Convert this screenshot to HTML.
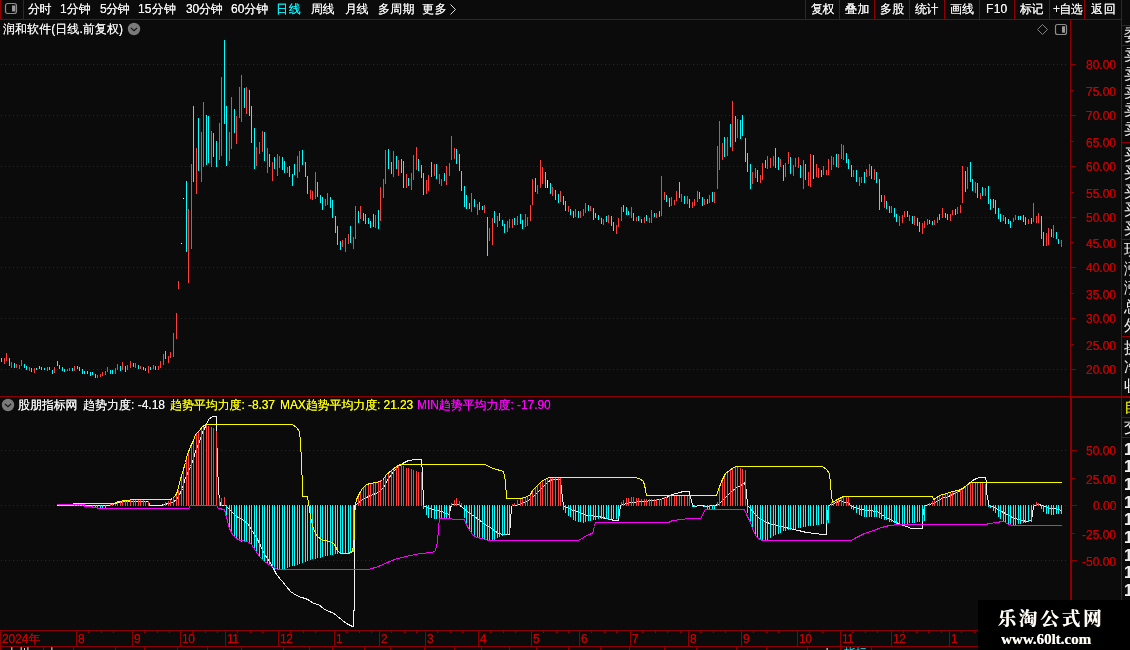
<!DOCTYPE html>
<html lang="zh-CN"><head><meta charset="utf-8"><title>润和软件 日线 - 股朋指标网</title>
<style>
html,body{margin:0;padding:0;background:#0b0b0b}
body{width:1130px;height:650px;position:relative;overflow:hidden;font:12px/12px "Liberation Sans","WenQuanYi Zen Hei",sans-serif;color:#f2f2f2}
.t{position:absolute;white-space:nowrap;height:12px;text-shadow:0 0 0 currentColor}
.cy{color:#00f4ff}.ye{color:#fcfc00}.mg{color:#fa00fa}
.ax{color:#c40000}.nn{letter-spacing:-.5px}
.wm1{position:absolute;left:978px;top:607px;width:143px;text-align:center;font:bold 18.5px/24px "Liberation Serif","Noto Serif CJK SC",serif;color:#fff;letter-spacing:2.9px;text-indent:2.9px;text-shadow:.4px .4px 0 #d8ccb0}
.wm2{position:absolute;left:978px;top:630.5px;width:136px;text-align:center;font:bold 15px/16px "Liberation Serif",serif;color:#fff;text-shadow:.4px .4px 0 #cdbf9c}
.strip{position:absolute;left:1124px;width:6px;overflow:hidden;white-space:nowrap;font:16px/16px "Liberation Sans","WenQuanYi Zen Hei",sans-serif;color:#f0f0f0;height:16px}
.bt{position:absolute;top:647px;height:3px;overflow:hidden;white-space:nowrap;font:12px/12px "Liberation Sans","WenQuanYi Zen Hei",sans-serif;color:#eee}
.t,.wm1,.wm2,.strip,.bt{will-change:transform}
</style></head><body>
<svg width="1130" height="650" viewBox="0 0 1130 650" style="position:absolute;left:0;top:0" shape-rendering="crispEdges">
<g stroke="#880000" stroke-width="1" stroke-dasharray="1 3" fill="none">
<path d="M1 64.5 H1066"/>
<path d="M1 115.5 H1066"/>
<path d="M1 166.5 H1066"/>
<path d="M1 217.5 H1066"/>
<path d="M1 267.5 H1066"/>
<path d="M1 318.5 H1066"/>
<path d="M1 369.5 H1066"/>
<path d="M1 450.5 H1066"/>
<path d="M1 505.5 H1066"/>
<path d="M1 560.5 H1066"/>
</g>
<g stroke="#8e0000" stroke-width="1" fill="none">
<path d="M0.5 0V20M23.5 0V20M0 19.5H1122M805.5 0V20M839.5 0V20M874.5 0V20M909.5 0V20M944.5 0V20M979.5 0V20M1014.5 0V20M1049.5 0V20M1084.5 0V20M1121.5 0V600M1070.5 20V397M0 396.5H1130M1071 397.5H1130M1071.5 397V600M1070.5 397V600M0 630.5H978M0 646.5H978M1071 64.5H1076M1071 90.5H1074M1071 115.5H1076M1071 141.5H1074M1071 166.5H1076M1071 192.5H1074M1071 217.5H1076M1071 242.5H1074M1071 267.5H1076M1071 293.5H1074M1071 318.5H1076M1071 344.5H1074M1071 369.5H1076M1072 450.5H1077M1072 478.5H1075M1072 505.5H1077M1072 533.5H1075M1072 560.5H1077M76.5 630V647M132.5 630V647M180.5 630V647M225.5 630V647M278.5 630V647M334.5 630V647M379.5 630V647M425.5 630V647M478.5 630V647M531.5 630V647M579.5 630V647M630.5 630V647M688.5 630V647M741.5 630V647M797.5 630V647M840.5 630V647M891.5 630V647M949.5 630V647M0.5 630V650M88.5 631V633M101.5 631V633M113.5 631V633M144.5 631V633M157.5 631V633M169.5 631V633M192.5 631V633M205.5 631V633M217.5 631V633M237.5 631V633M250.5 631V633M262.5 631V633M290.5 631V633M303.5 631V633M315.5 631V633M346.5 631V633M359.5 631V633M371.5 631V633M391.5 631V633M404.5 631V633M416.5 631V633M437.5 631V633M450.5 631V633M462.5 631V633M490.5 631V633M503.5 631V633M515.5 631V633M543.5 631V633M556.5 631V633M568.5 631V633M591.5 631V633M604.5 631V633M616.5 631V633M642.5 631V633M655.5 631V633M667.5 631V633M680.5 631V633M700.5 631V633M713.5 631V633M725.5 631V633M753.5 631V633M766.5 631V633M778.5 631V633M809.5 631V633M822.5 631V633M852.5 631V633M865.5 631V633M877.5 631V633M903.5 631V633M916.5 631V633M928.5 631V633M941.5 631V633M961.5 631V633M974.5 631V633M43.5 647V650M73.5 647V650M115.5 647V650M144.5 647V650M177.5 647V650M207.5 647V650M241.5 647V650M283.5 647V650M309.5 647V650M332.5 647V650M364.5 647V650M390.5 647V650M424.5 647V650M454.5 647V650M481.5 647V650M509.5 647V650M536.5 647V650M568.5 647V650M600.5 647V650M629.5 647V650M664.5 647V650M696.5 647V650M736.5 647V650M766.5 647V650M807.5 647V650M840.5 647V650M871.5 647V650M1122 25.5H1130M1122 45.5H1130M1122 142.5H1130M1122 239.5H1130M1122 336.5H1130M1122 417.5H1130M1122 437.5H1130"/>
</g>
<path d="M4.5 358V364M6.5 353V361M11.5 362V368M16.5 364V368M19.5 365V369M21.5 360V366M29.5 367V371M34.5 368V373M47.5 367V371M54.5 367V373M67.5 369V371M69.5 368V371M74.5 366V371M97.5 375V378M100.5 374V377M102.5 372V376M105.5 371V375M107.5 367V372M115.5 368V374M117.5 364V370M122.5 362V370M127.5 365V370M130.5 361V368M135.5 363V368M140.5 366V369M148.5 366V373M153.5 365V369M158.5 366V370M160.5 361V368M163.5 354V365M168.5 356V363M170.5 352V358M173.5 333V357M176.5 313V339M178.5 281V289M188.5 209V283M191.5 164V249M196.5 148V194M201.5 132V182M203.5 102V167M211.5 131V167M219.5 123V160M221.5 77V156M229.5 132V161M231.5 97V149M236.5 116V144M239.5 87V118M241.5 75V122M246.5 87V114M256.5 147V166M259.5 142V154M262.5 131V152M267.5 148V173M272.5 162V181M277.5 154V176M279.5 156V168M287.5 167V173M297.5 156V178M299.5 151V172M310.5 190V199M312.5 191V200M315.5 172V199M325.5 199V206M327.5 193V205M342.5 240V247M345.5 238V252M348.5 234V244M353.5 237V249M355.5 206V239M360.5 206V219M375.5 215V228M380.5 187V221M383.5 179V198M385.5 150V184M393.5 151V177M398.5 160V176M406.5 174V188M411.5 173V190M413.5 155V180M416.5 147V170M426.5 180V194M428.5 175V191M434.5 164V176M439.5 174V184M441.5 179V186M446.5 166V185M449.5 163V176M451.5 136V160M454.5 148V159M471.5 193V212M477.5 204V215M484.5 205V213M489.5 228V241M492.5 218V245M497.5 216V227M507.5 221V232M509.5 219V228M512.5 219V228M517.5 216V225M525.5 214V227M527.5 217V226M530.5 205V221M532.5 179V205M537.5 185V194M540.5 160V188M542.5 167V184M552.5 187V196M560.5 191V202M568.5 206V212M575.5 209V217M580.5 211V218M583.5 209V216M585.5 203V213M590.5 206V211M603.5 219V225M608.5 215V223M616.5 225V234M618.5 218V227M621.5 207V221M631.5 207V218M636.5 217V221M644.5 217V223M649.5 218V223M651.5 210V223M656.5 213V218M661.5 176V216M664.5 192V200M671.5 197V206M674.5 200V205M676.5 191V201M681.5 194V202M687.5 196V204M692.5 202V208M694.5 199V206M697.5 191V202M704.5 199V205M709.5 195V203M714.5 192V203M717.5 146V189M719.5 121V170M722.5 143V160M727.5 137V156M732.5 101V151M737.5 119V138M752.5 172V184M755.5 168V178M760.5 175V183M762.5 163V180M767.5 156V169M770.5 158V168M773.5 156V166M780.5 159V167M785.5 163V177M788.5 152V164M793.5 165V176M795.5 158V167M798.5 157V168M803.5 160V189M808.5 172V186M810.5 154V187M816.5 164V177M818.5 168V178M823.5 166V175M826.5 170V175M828.5 159V175M831.5 156V170M833.5 157V165M838.5 154V168M841.5 144V159M843.5 145V160M853.5 170V177M859.5 177V186M861.5 177V183M866.5 169V177M869.5 164V176M874.5 169V180M884.5 195V208M891.5 206V213M899.5 216V226M902.5 215V223M904.5 211V217M909.5 215V221M914.5 216V225M922.5 223V234M924.5 221V228M927.5 219V225M934.5 220V225M937.5 217V223M942.5 208V218M950.5 214V221M952.5 210V215M957.5 207V214M960.5 205V213M962.5 166V203M967.5 167V189M975.5 182V193M980.5 193V199M985.5 188V196M1003.5 215V221M1013.5 218V222M1015.5 215V220M1028.5 219V224M1033.5 203V222M1036.5 216V223M1038.5 213V223M1046.5 233V246M1048.5 228V245M1053.5 225V238M1061.5 240V247" stroke="#ff3d3d" stroke-width="1" fill="none"/>
<path d="M1.5 358V362M9.5 358V366M14.5 363V368M24.5 364V368M26.5 366V370M31.5 368V372M36.5 368V370M39.5 366V369M41.5 367V370M44.5 368V370M49.5 367V370M52.5 370V374M57.5 361V366M59.5 365V369M62.5 367V371M64.5 369V372M72.5 368V371M77.5 366V369M79.5 367V371M82.5 369V374M84.5 371V374M87.5 371V374M90.5 372V376M92.5 372V375M95.5 374V378M110.5 370V374M112.5 370V374M120.5 366V371M125.5 366V372M133.5 363V367M138.5 365V369M143.5 367V370M145.5 368V371M150.5 367V370M155.5 366V370M165.5 351V359M186.5 181V252M193.5 106V182M198.5 118V171M206.5 115V165M208.5 116V163M213.5 133V157M216.5 141V167M224.5 40V124M226.5 106V166M234.5 109V133M244.5 88V108M249.5 90V116M251.5 106V143M254.5 128V169M264.5 132V161M269.5 154V167M274.5 157V169M282.5 157V170M284.5 161V173M289.5 166V177M292.5 174V186M294.5 164V175M302.5 150V165M305.5 162V177M307.5 176V194M317.5 182V197M320.5 195V203M322.5 197V210M330.5 197V208M332.5 200V218M335.5 216V233M337.5 226V245M340.5 241V250M350.5 226V243M358.5 211V223M363.5 213V221M365.5 214V224M368.5 218V224M370.5 221V228M373.5 214V227M378.5 210V229M388.5 149V169M391.5 162V174M396.5 156V169M401.5 159V173M403.5 161V188M408.5 178V186M418.5 159V171M421.5 165V178M423.5 173V195M431.5 162V177M436.5 164V179M444.5 173V181M456.5 149V164M459.5 154V171M461.5 171V191M464.5 186V207M466.5 195V209M469.5 203V209M474.5 199V207M479.5 202V210M482.5 206V210M487.5 217V256M494.5 211V223M499.5 213V221M502.5 220V226M504.5 224V233M514.5 218V225M520.5 214V224M522.5 220V229M535.5 178V192M545.5 172V188M550.5 183V194M555.5 190V200M558.5 194V203M563.5 196V205M565.5 201V211M570.5 209V215M573.5 211V218M578.5 211V218M588.5 205V211M593.5 208V220M595.5 213V218M598.5 215V220M601.5 218V224M606.5 216V222M611.5 216V226M613.5 222V231M623.5 205V212M626.5 207V215M628.5 211V215M633.5 213V221M638.5 216V221M641.5 219V223M646.5 215V221M654.5 213V217M659.5 211V217M666.5 195V202M669.5 198V207M679.5 182V198M684.5 196V204M689.5 199V208M699.5 192V199M702.5 197V206M707.5 199V204M712.5 192V202M724.5 137V157M730.5 124V147M735.5 116V142M740.5 120V139M742.5 115V136M745.5 138V162M747.5 153V172M750.5 164V189M757.5 170V182M765.5 160V168M775.5 148V168M778.5 157V170M783.5 165V181M790.5 157V174M800.5 165V178M805.5 164V180M813.5 155V179M821.5 170V177M836.5 154V167M846.5 153V163M848.5 159V169M851.5 165V177M856.5 170V182M864.5 172V183M871.5 166V179M876.5 172V183M879.5 179V210M881.5 195V202M886.5 201V209M889.5 206V213M894.5 208V217M896.5 214V222M907.5 211V217M912.5 216V224M917.5 218V226M919.5 222V232M929.5 220V224M932.5 221V225M939.5 214V220M945.5 213V218M947.5 214V220M955.5 209V215M965.5 171V192M970.5 162V182M972.5 179V191M977.5 183V198M982.5 187V196M988.5 186V204M990.5 199V210M993.5 199V208M995.5 200V214M998.5 208V219M1000.5 214V222M1005.5 217V224M1008.5 219V224M1010.5 221V228M1018.5 216V220M1020.5 216V220M1023.5 215V222M1025.5 217V225M1031.5 218V224M1041.5 216V239M1043.5 232V246M1051.5 229V237M1056.5 232V239M1058.5 239V244" stroke="#00ffff" stroke-width="1" fill="none"/>
<path d="M181.5 243V244M183.5 198V199M547.5 180V188" stroke="#f2f2f2" stroke-width="1" fill="none"/>
<polyline points="56.5,505.5 108.5,505.5 112.5,504.5 118.5,502.5 126.5,501.5 148.5,501.5 149.5,505.5 160.5,505.5 164.5,504.5 168.5,503.5 172.5,502.5 176.5,499.5 179.5,494.5 182.5,488.5 184.5,480.5 187.5,473.5 190.5,466.5 193.5,458.5 195.5,451.5 199.5,441.5 202.5,432.5 206.5,424.5 208.5,419.5 212.5,416.5 216.5,416.5 216.5,432.5 217.5,462.5 218.5,491.5 220.5,505.5 225.5,505.5 230.5,510.5 236.5,516.5 243.5,520.5 248.5,524.5 252.5,531.5 256.5,537.5 260.5,545.5 264.5,554.5 269.5,561.5 272.5,566.5 276.5,574.5 281.5,580.5 286.5,586.5 290.5,591.5 296.5,595.5 301.5,597.5 305.5,598.5 309.5,600.5 313.5,603.5 318.5,604.5 323.5,608.5 328.5,611.5 332.5,612.5 336.5,615.5 342.5,620.5 346.5,623.5 352.5,626.5 353.5,626.5 354.5,594.5 354.5,505.5 356.5,504.5 362.5,499.5 370.5,495.5 378.5,492.5 383.5,487.5 388.5,478.5 393.5,471.5 398.5,466.5 402.5,463.5 408.5,460.5 416.5,459.5 421.5,459.5 422.5,474.5 423.5,505.5 424.5,506.5 432.5,509.5 441.5,511.5 446.5,513.5 449.5,514.5 450.5,508.5 451.5,504.5 458.5,504.5 462.5,507.5 468.5,512.5 474.5,516.5 482.5,522.5 491.5,528.5 498.5,533.5 503.5,534.5 509.5,534.5 510.5,522.5 511.5,506.5 512.5,505.5 516.5,505.5 524.5,502.5 531.5,498.5 537.5,492.5 543.5,486.5 548.5,481.5 552.5,479.5 560.5,479.5 561.5,489.5 563.5,505.5 566.5,507.5 573.5,510.5 579.5,512.5 587.5,515.5 598.5,516.5 606.5,518.5 614.5,520.5 618.5,520.5 619.5,512.5 620.5,505.5 622.5,504.5 631.5,502.5 643.5,501.5 652.5,500.5 660.5,499.5 666.5,497.5 672.5,494.5 679.5,492.5 683.5,491.5 689.5,491.5 690.5,497.5 692.5,504.5 693.5,506.5 700.5,505.5 702.5,505.5 704.5,506.5 714.5,505.5 718.5,504.5 723.5,499.5 729.5,493.5 735.5,488.5 742.5,484.5 744.5,482.5 746.5,491.5 747.5,505.5 750.5,508.5 754.5,513.5 758.5,517.5 764.5,521.5 772.5,524.5 781.5,526.5 789.5,528.5 798.5,530.5 806.5,532.5 814.5,533.5 822.5,534.5 826.5,534.5 826.5,524.5 828.5,505.5 831.5,504.5 836.5,502.5 840.5,500.5 844.5,502.5 848.5,502.5 850.5,505.5 854.5,507.5 860.5,509.5 868.5,510.5 877.5,511.5 881.5,514.5 887.5,518.5 894.5,521.5 900.5,524.5 906.5,526.5 911.5,528.5 922.5,528.5 922.5,518.5 924.5,505.5 929.5,504.5 935.5,502.5 941.5,498.5 948.5,496.5 954.5,493.5 960.5,490.5 966.5,485.5 972.5,480.5 976.5,478.5 979.5,477.5 985.5,477.5 986.5,482.5 986.5,492.5 988.5,502.5 988.5,505.5 992.5,506.5 996.5,508.5 1001.5,511.5 1005.5,513.5 1010.5,516.5 1014.5,518.5 1019.5,519.5 1022.5,520.5 1026.5,521.5 1031.5,520.5 1032.5,513.5 1033.5,506.5 1034.5,505.5 1039.5,504.5 1041.5,505.5 1044.5,506.5 1049.5,508.5 1054.5,508.5 1058.5,509.5 1061.5,510.5" stroke="#f2f2f2" stroke-width="1" fill="none"/>
<path d="M74.5 504V506M77.5 504V506M79.5 504V506M82.5 504V506M110.5 503V506M112.5 503V506M115.5 503V506M117.5 502V506M120.5 501V506M122.5 501V506M125.5 501V506M127.5 501V506M130.5 500V506M133.5 500V506M135.5 500V506M138.5 500V506M140.5 500V506M143.5 500V506M145.5 501V506M148.5 501V506M163.5 504V506M165.5 502V506M168.5 501V506M170.5 500V506M173.5 498V506M176.5 494V506M178.5 490V506M181.5 475V506M183.5 468V506M186.5 458V506M188.5 451V506M191.5 443V506M193.5 439V506M196.5 433V506M198.5 431V506M201.5 428V506M203.5 426V506M206.5 424V506M208.5 426V506M211.5 427V506M213.5 428V506M216.5 431V506M219.5 498V506M221.5 498V506M224.5 497V506M355.5 502V506M358.5 495V506M360.5 491V506M363.5 487V506M365.5 485V506M368.5 484V506M370.5 483V506M373.5 482V506M375.5 482V506M378.5 481V506M380.5 480V506M383.5 478V506M385.5 476V506M388.5 473V506M391.5 470V506M393.5 469V506M396.5 467V506M398.5 466V506M401.5 465V506M403.5 466V506M406.5 468V506M408.5 468V506M411.5 469V506M413.5 470V506M416.5 471V506M418.5 472V506M421.5 472V506M451.5 503V506M454.5 500V506M456.5 498V506M459.5 501V506M461.5 503V506M512.5 504V506M514.5 503V506M517.5 500V506M520.5 498V506M522.5 497V506M525.5 497V506M527.5 496V506M530.5 494V506M532.5 491V506M535.5 488V506M537.5 486V506M540.5 482V506M542.5 481V506M545.5 479V506M547.5 478V506M550.5 477V506M552.5 478V506M555.5 478V506M558.5 478V506M560.5 478V506M621.5 502V506M623.5 500V506M626.5 498V506M628.5 498V506M631.5 497V506M633.5 497V506M636.5 498V506M638.5 498V506M641.5 499V506M644.5 499V506M646.5 499V506M649.5 499V506M651.5 499V506M654.5 499V506M656.5 499V506M659.5 499V506M661.5 499V506M664.5 497V506M666.5 497V506M669.5 496V506M671.5 496V506M674.5 496V506M676.5 496V506M679.5 496V506M681.5 496V506M684.5 496V506M687.5 496V506M689.5 496V506M717.5 502V506M719.5 488V506M722.5 479V506M724.5 475V506M727.5 472V506M730.5 469V506M732.5 468V506M735.5 467V506M737.5 466V506M740.5 468V506M742.5 469V506M745.5 470V506M831.5 502V506M833.5 501V506M836.5 500V506M838.5 499V506M841.5 498V506M843.5 497V506M846.5 497V506M848.5 497V506M927.5 504V506M929.5 503V506M932.5 501V506M934.5 500V506M937.5 498V506M939.5 496V506M942.5 495V506M945.5 493V506M947.5 493V506M950.5 492V506M952.5 491V506M955.5 491V506M957.5 490V506M960.5 490V506M962.5 489V506M965.5 487V506M967.5 485V506M970.5 483V506M972.5 483V506M975.5 483V506M977.5 483V506M980.5 483V506M982.5 483V506M985.5 484V506M1033.5 504V506M1036.5 502V506M1038.5 503V506" stroke="#ff3d3d" stroke-width="1" fill="none"/>
<path d="M92.5 505V508M95.5 505V508M97.5 505V508M100.5 505V508M102.5 505V508M105.5 505V508M226.5 505V518M229.5 505V528M231.5 505V532M234.5 505V537M236.5 505V539M239.5 505V541M241.5 505V542M244.5 505V542M246.5 505V542M249.5 505V544M251.5 505V545M254.5 505V550M256.5 505V553M259.5 505V556M262.5 505V559M264.5 505V561M267.5 505V564M269.5 505V565M272.5 505V567M274.5 505V569M277.5 505V570M279.5 505V570M282.5 505V569M284.5 505V569M287.5 505V568M289.5 505V567M292.5 505V566M294.5 505V566M297.5 505V565M299.5 505V564M302.5 505V563M305.5 505V562M307.5 505V561M310.5 505V560M312.5 505V559M315.5 505V559M317.5 505V558M320.5 505V558M322.5 505V557M325.5 505V556M327.5 505V556M330.5 505V555M332.5 505V555M335.5 505V554M337.5 505V554M340.5 505V554M342.5 505V554M345.5 505V554M348.5 505V553M350.5 505V553M353.5 505V552M423.5 505V509M426.5 505V515M428.5 505V518M431.5 505V518M434.5 505V519M436.5 505V519M439.5 505V519M441.5 505V519M444.5 505V519M446.5 505V519M449.5 505V519M464.5 505V518M466.5 505V525M469.5 505V531M471.5 505V533M474.5 505V536M477.5 505V538M479.5 505V538M482.5 505V539M484.5 505V539M487.5 505V540M489.5 505V540M492.5 505V541M494.5 505V540M497.5 505V538M499.5 505V537M502.5 505V536M504.5 505V535M507.5 505V535M509.5 505V534M563.5 505V510M565.5 505V513M568.5 505V516M570.5 505V517M573.5 505V520M575.5 505V521M578.5 505V522M580.5 505V522M583.5 505V523M585.5 505V522M588.5 505V521M590.5 505V521M593.5 505V520M595.5 505V520M598.5 505V519M601.5 505V519M603.5 505V519M606.5 505V519M608.5 505V519M611.5 505V519M613.5 505V519M616.5 505V519M618.5 505V518M692.5 505V507M694.5 505V507M704.5 505V507M707.5 505V510M709.5 505V510M712.5 505V510M714.5 505V510M747.5 505V513M750.5 505V523M752.5 505V530M755.5 505V536M757.5 505V538M760.5 505V540M762.5 505V540M765.5 505V540M767.5 505V540M770.5 505V538M773.5 505V536M775.5 505V535M778.5 505V534M780.5 505V533M783.5 505V531M785.5 505V531M788.5 505V530M790.5 505V530M793.5 505V529M795.5 505V529M798.5 505V528M800.5 505V528M803.5 505V527M805.5 505V527M808.5 505V526M810.5 505V526M813.5 505V526M816.5 505V525M818.5 505V525M821.5 505V524M823.5 505V524M826.5 505V523M828.5 505V523M851.5 505V509M853.5 505V510M856.5 505V513M859.5 505V515M861.5 505V516M864.5 505V517M866.5 505V517M869.5 505V517M871.5 505V517M874.5 505V517M876.5 505V517M879.5 505V518M881.5 505V519M884.5 505V520M886.5 505V520M889.5 505V522M891.5 505V522M894.5 505V523M896.5 505V524M899.5 505V524M902.5 505V524M904.5 505V524M907.5 505V524M909.5 505V523M912.5 505V523M914.5 505V523M917.5 505V522M919.5 505V522M922.5 505V521M924.5 505V521M988.5 505V507M990.5 505V508M993.5 505V511M995.5 505V513M998.5 505V517M1000.5 505V519M1003.5 505V521M1005.5 505V522M1008.5 505V524M1010.5 505V525M1013.5 505V525M1015.5 505V525M1018.5 505V524M1020.5 505V524M1023.5 505V523M1025.5 505V523M1028.5 505V522M1031.5 505V522M1041.5 505V509M1043.5 505V512M1046.5 505V514M1048.5 505V514M1051.5 505V515M1053.5 505V515M1056.5 505V514M1058.5 505V514M1061.5 505V514" stroke="#00ffff" stroke-width="1" fill="none"/>
<polyline points="56.5,504.5 84.5,504.5 84.5,506.5 92.5,506.5 92.5,507.5 97.5,507.5 97.5,508.5 188.5,508.5 190.5,505.5 216.5,505.5 218.5,508.5 224.5,509.5 226.5,517.5 229.5,528.5 232.5,534.5 236.5,538.5 240.5,540.5 247.5,541.5 251.5,544.5 255.5,550.5 259.5,556.5 264.5,561.5 270.5,565.5 275.5,568.5 278.5,569.5 368.5,569.5 378.5,566.5 389.5,561.5 397.5,558.5 410.5,555.5 420.5,553.5 432.5,552.5 435.5,550.5 437.5,541.5 438.5,528.5 439.5,518.5 464.5,519.5 465.5,522.5 468.5,528.5 472.5,534.5 476.5,537.5 482.5,538.5 488.5,540.5 578.5,540.5 583.5,537.5 588.5,534.5 592.5,533.5 594.5,526.5 595.5,522.5 596.5,522.5 668.5,522.5 672.5,520.5 681.5,519.5 689.5,518.5 700.5,518.5 702.5,515.5 704.5,510.5 705.5,509.5 744.5,509.5 746.5,514.5 750.5,522.5 752.5,528.5 755.5,535.5 758.5,538.5 762.5,540.5 851.5,540.5 856.5,537.5 864.5,533.5 873.5,530.5 881.5,527.5 889.5,525.5 898.5,524.5 906.5,524.5 985.5,524.5 989.5,523.5 996.5,522.5 998.5,522.5 1000.5,521.5 1003.5,521.5 1004.5,521.5 1006.5,523.5 1009.5,524.5 1012.5,525.5 1061.5,525.5" stroke="#fa00fa" stroke-width="1" fill="none"/>
<polyline points="72.5,503.5 114.5,503.5 116.5,502.5 118.5,501.5 126.5,500.5 134.5,499.5 170.5,499.5 172.5,498.5 175.5,495.5 177.5,491.5 179.5,482.5 182.5,472.5 185.5,462.5 187.5,454.5 190.5,446.5 193.5,440.5 195.5,434.5 199.5,430.5 202.5,426.5 206.5,424.5 292.5,424.5 296.5,427.5 299.5,431.5 300.5,441.5 301.5,462.5 302.5,486.5 302.5,496.5 307.5,496.5 308.5,502.5 309.5,508.5 310.5,517.5 313.5,528.5 316.5,535.5 322.5,540.5 330.5,541.5 334.5,544.5 337.5,550.5 340.5,553.5 348.5,553.5 352.5,551.5 354.5,536.5 354.5,515.5 355.5,504.5 356.5,499.5 359.5,493.5 362.5,488.5 366.5,484.5 370.5,483.5 376.5,482.5 382.5,480.5 386.5,474.5 391.5,470.5 396.5,466.5 400.5,464.5 484.5,464.5 493.5,468.5 503.5,471.5 505.5,481.5 506.5,498.5 521.5,498.5 527.5,496.5 530.5,494.5 532.5,490.5 537.5,485.5 541.5,481.5 546.5,478.5 549.5,477.5 634.5,477.5 639.5,478.5 643.5,481.5 645.5,489.5 646.5,495.5 716.5,495.5 718.5,489.5 721.5,481.5 725.5,473.5 729.5,470.5 733.5,467.5 736.5,466.5 822.5,466.5 826.5,469.5 829.5,473.5 830.5,483.5 831.5,495.5 832.5,502.5 835.5,500.5 839.5,498.5 843.5,496.5 932.5,496.5 933.5,499.5 935.5,498.5 939.5,495.5 946.5,493.5 952.5,491.5 958.5,490.5 962.5,488.5 966.5,485.5 970.5,482.5 972.5,482.5 1061.5,482.5" stroke="#fcfc00" stroke-width="1" fill="none"/>
</svg>

<svg width="1130" height="650" viewBox="0 0 1130 650" style="position:absolute;left:0;top:0">
<rect x="5.5" y="3.5" width="11" height="10" rx="2.2" fill="none" stroke="#8c8c8c" stroke-width="1.2"/>
<rect x="12" y="5.5" width="3.4" height="6" fill="#9a9a9a"/>
<circle cx="134" cy="29" r="6.2" fill="#7a7a7a"/>
<path d="M130.8 27.9 L134 30.7 L137.1 27.9" fill="none" stroke="#101010" stroke-width="1.15"/>
<circle cx="8" cy="405" r="6.2" fill="#7a7a7a"/>
<path d="M4.8 403.9 L8 406.7 L11.1 403.9" fill="none" stroke="#101010" stroke-width="1.15"/>
<path d="M1042.5 24.5 L1047.5 29.5 L1042.5 34.5 L1037.5 29.5 Z" fill="none" stroke="#808080" stroke-width="1"/>
<rect x="1055.5" y="24.5" width="11" height="10" rx="2" fill="none" stroke="#8c8c8c" stroke-width="1.2"/>
<rect x="1062" y="26.3" width="3" height="6.4" fill="#9a9a9a"/>
<path d="M450.5 4.5 L455.5 9.5 L450.5 14.5" fill="none" stroke="#dcdcdc" stroke-width="1"/>
<rect x="978" y="600" width="152" height="50" fill="#000"/>
</svg>

<div class="t" id="t0" style="top:3px;left:27.80px;letter-spacing:-0.600px;">分时</div>
<div class="t" id="t1" style="top:3px;left:60.40px;letter-spacing:0.050px;">1分钟</div>
<div class="t" id="t2" style="top:3px;left:100.20px;letter-spacing:-0.450px;">5分钟</div>
<div class="t" id="t3" style="top:3px;left:138.00px;letter-spacing:0.200px;">15分钟</div>
<div class="t" id="t4" style="top:3px;left:185.60px;letter-spacing:-0.233px;">30分钟</div>
<div class="t" id="t5" style="top:3px;left:231.00px;letter-spacing:0.000px;">60分钟</div>
<div class="t cy" id="t6" style="top:3px;left:276.00px;letter-spacing:0.800px;">日线</div>
<div class="t" id="t7" style="top:3px;left:311.00px;letter-spacing:-0.500px;">周线</div>
<div class="t" id="t8" style="top:3px;left:345.00px;letter-spacing:-0.500px;">月线</div>
<div class="t" id="t9" style="top:3px;left:378.00px;letter-spacing:0.250px;">多周期</div>
<div class="t" id="t10" style="top:3px;left:422.00px;letter-spacing:0.800px;">更多</div>
<div class="t" id="t11" style="top:3px;left:811.00px;letter-spacing:-0.500px;">复权</div>
<div class="t" id="t12" style="top:3px;left:845.00px;letter-spacing:0.400px;">叠加</div>
<div class="t" id="t13" style="top:3px;left:880.20px;letter-spacing:0.200px;">多股</div>
<div class="t" id="t14" style="top:3px;left:914.80px;letter-spacing:-0.600px;">统计</div>
<div class="t" id="t15" style="top:3px;left:950.20px;letter-spacing:0.100px;">画线</div>
<div class="t" id="t16" style="top:3px;left:986.00px;letter-spacing:0.300px;">F10</div>
<div class="t" id="t17" style="top:3px;left:1019.80px;letter-spacing:-0.600px;">标记</div>
<div class="t" id="t18" style="top:3px;left:1052.80px;letter-spacing:-0.600px;">+自选</div>
<div class="t" id="t19" style="top:3px;left:1090.60px;letter-spacing:0.800px;">返回</div>
<div class="t" id="t20" style="top:23px;left:3.20px;letter-spacing:0.055px;">润和软件(日线.前复权)</div>
<div class="t" id="t21" style="top:399.3px;left:18.20px;letter-spacing:-0.100px;">股朋指标网</div>
<div class="t" id="t22" style="top:399.3px;left:83.00px;letter-spacing:0.000px;">趋势力度: -4.18</div>
<div class="t ye" id="t23" style="top:399.3px;left:170.00px;letter-spacing:-0.083px;">趋势平均力度: -8.37</div>
<div class="t ye" id="t24" style="top:399.3px;left:280.00px;letter-spacing:-0.100px;">MAX趋势平均力度: 21.23</div>
<div class="t mg" id="t25" style="top:399.3px;left:417.00px;letter-spacing:-0.062px;">MIN趋势平均力度: -17.90</div>
<div class="t ax" id="t26" style="top:59px;right:14px;">80.00</div>
<div class="t ax" id="t27" style="top:86px;right:14px;">75.00</div>
<div class="t ax" id="t28" style="top:110px;right:14px;">70.00</div>
<div class="t ax" id="t29" style="top:137px;right:14px;">65.00</div>
<div class="t ax" id="t30" style="top:161px;right:14px;">60.00</div>
<div class="t ax" id="t31" style="top:188px;right:14px;">55.00</div>
<div class="t ax" id="t32" style="top:212px;right:14px;">50.00</div>
<div class="t ax" id="t33" style="top:238px;right:14px;">45.00</div>
<div class="t ax" id="t34" style="top:262px;right:14px;">40.00</div>
<div class="t ax" id="t35" style="top:289px;right:14px;">35.00</div>
<div class="t ax" id="t36" style="top:313px;right:14px;">30.00</div>
<div class="t ax" id="t37" style="top:340px;right:14px;">25.00</div>
<div class="t ax" id="t38" style="top:364px;right:14px;">20.00</div>
<div class="t ax" id="t39" style="top:445px;right:14px;">50.00</div>
<div class="t ax" id="t40" style="top:474px;right:14px;">25.00</div>
<div class="t ax" id="t41" style="top:500px;right:14px;">0.00</div>
<div class="t ax" id="t42" style="top:529.2px;right:14px;">-25.00</div>
<div class="t ax" id="t43" style="top:555.5px;right:14px;">-50.00</div>
<div class="t ax" id="t44" style="top:633px;left:2.40px;letter-spacing:-0.050px;">2024年</div>
<div class="t ax" id="t45" style="top:633px;left:77.60px;">8</div>
<div class="t ax" id="t46" style="top:633px;left:133.60px;">9</div>
<div class="t ax nn" id="t47" style="top:633px;left:181.60px;">10</div>
<div class="t ax nn" id="t48" style="top:633px;left:226.60px;">11</div>
<div class="t ax nn" id="t49" style="top:633px;left:279.60px;">12</div>
<div class="t ax" id="t50" style="top:633px;left:335.60px;">1</div>
<div class="t ax" id="t51" style="top:633px;left:380.60px;">2</div>
<div class="t ax" id="t52" style="top:633px;left:426.60px;">3</div>
<div class="t ax" id="t53" style="top:633px;left:479.60px;">4</div>
<div class="t ax" id="t54" style="top:633px;left:532.60px;">5</div>
<div class="t ax" id="t55" style="top:633px;left:580.60px;">6</div>
<div class="t ax" id="t56" style="top:633px;left:631.60px;">7</div>
<div class="t ax" id="t57" style="top:633px;left:689.60px;">8</div>
<div class="t ax" id="t58" style="top:633px;left:742.60px;">9</div>
<div class="t ax nn" id="t59" style="top:633px;left:798.60px;">10</div>
<div class="t ax nn" id="t60" style="top:633px;left:841.60px;">11</div>
<div class="t ax nn" id="t61" style="top:633px;left:892.60px;">12</div>
<div class="t ax" id="t62" style="top:633px;left:950.60px;">1</div>
<div class="wm1">乐淘公式网</div>
<div class="wm2">www.60lt.com</div>
<div class="strip" style="top:27px">委比</div>
<div class="strip" style="top:47px">卖五</div>
<div class="strip" style="top:65.5px">卖四</div>
<div class="strip" style="top:84px">卖三</div>
<div class="strip" style="top:102px">卖二</div>
<div class="strip" style="top:120.5px">卖一</div>
<div class="strip" style="top:146.5px">买一</div>
<div class="strip" style="top:165px">买二</div>
<div class="strip" style="top:183.5px">买三</div>
<div class="strip" style="top:202px">买四</div>
<div class="strip" style="top:220.5px">买五</div>
<div class="strip" style="top:242px">现价</div>
<div class="strip" style="top:261px">涨跌</div>
<div class="strip" style="top:280px">涨幅</div>
<div class="strip" style="top:299px">总量</div>
<div class="strip" style="top:318px">外盘</div>
<div class="strip" style="top:340px">换手</div>
<div class="strip" style="top:359px">净资</div>
<div class="strip" style="top:378px">收益</div>
<div class="strip" style="top:399px;color:#fcfc00">自选</div>
<div class="strip" style="top:419px">交易</div>
<div class="strip" style="top:441.5px;left:1123.5px;font-weight:bold">14:50</div>
<div class="strip" style="top:459.2px;left:1123.5px;font-weight:bold">14:51</div>
<div class="strip" style="top:476.9px;left:1123.5px;font-weight:bold">14:52</div>
<div class="strip" style="top:494.6px;left:1123.5px;font-weight:bold">14:53</div>
<div class="strip" style="top:512.3px;left:1123.5px;font-weight:bold">14:54</div>
<div class="strip" style="top:530px;left:1123.5px;font-weight:bold">14:55</div>
<div class="strip" style="top:547.7px;left:1123.5px;font-weight:bold">14:56</div>
<div class="strip" style="top:565.4px;left:1123.5px;font-weight:bold">14:57</div>
<div class="strip" style="top:583.1px;left:1123.5px;font-weight:bold">14:58</div>
<div class="bt" style="left:6px">山川</div>
<div class="bt" style="left:45.5px">上</div>
<div class="bt" style="left:826px">'</div>
<div class="bt" style="left:844px;letter-spacing:-1px;color:#00f4ff">指标</div>
</body></html>
